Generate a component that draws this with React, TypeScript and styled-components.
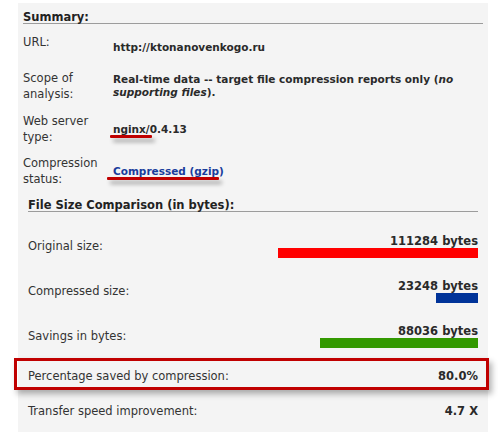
import React from "react";
import styled, { createGlobalStyle } from "styled-components";

const GlobalStyle = createGlobalStyle`
  html, body {
    margin: 0;
    padding: 0;
    background: #ffffff;
  }
  body {
    font-family: "DejaVu Sans", Verdana, sans-serif;
    font-size: 11.5px;
    color: #333333;
  }
`;

const Panel = styled.div`
  margin: 3px 0 0 18px;
  width: 470px;
  min-height: 429px;
  background: #f4f4f4;
`;

const Summary = styled.section`
  padding: 0 5px;
`;

const Heading = styled.h3`
  margin: 0;
  padding-top: 8px;
  font-size: 11.5px;
  line-height: 12px;
  font-weight: bold;
  color: #222222;
  border-bottom: 1px solid #9c9c9c;
`;

const InfoRow = styled.div<{ $space: number }>`
  display: grid;
  grid-template-columns: 84px 1fr;
  column-gap: 6px;
  align-items: center;
  margin-top: ${({ $space }) => $space}px;
`;

const InfoLabel = styled.div`
  line-height: 16px;
  color: #333333;
`;

const InfoValue = styled.div<{ $drop?: number }>`
  font-size: 10.5px;
  line-height: 13px;
  font-weight: bold;
  color: #2a2a2a;
  margin-top: ${({ $drop }) => $drop ?? 0}px;
`;

const Marked = styled.span`
  position: relative;
  display: inline-block;
`;

const Scribble = styled.span<{ $left: number; $width: number; $top: number }>`
  position: absolute;
  left: ${({ $left }) => $left}px;
  top: ${({ $top }) => $top}px;
  width: ${({ $width }) => $width}px;
  height: 3px;
  background: #c00000;
  border-radius: 1px;
  box-shadow: 3px 4px 4px rgba(0, 0, 0, 0.35);
`;

const Status = styled.span`
  color: #183c9c;
`;

const Comparison = styled.section`
  margin-top: 4px;
  padding: 0 10px;
`;

const SizeList = styled.div`
  margin-top: 12px;
`;

const SizeRow = styled.div`
  position: relative;
  display: flex;
  justify-content: space-between;
  align-items: center;
  padding: 11px 0;
`;

const SizeLabel = styled.div`
  line-height: 13px;
  color: #333333;
`;

const SizeValue = styled.div`
  display: flex;
  flex-direction: column;
  align-items: flex-end;
  line-height: 13px;
  font-weight: bold;
  color: #2a2a2a;
`;

const Bar = styled.div<{ $color: string }>`
  height: 10px;
  background: ${({ $color }) => $color};
`;

const HighlightBox = styled.div`
  position: absolute;
  left: -14px;
  right: -11px;
  top: -1px;
  bottom: 4px;
  border: 3px solid #c00000;
  box-shadow: 3px 4px 6px rgba(0, 0, 0, 0.3);
  pointer-events: none;
`;

const sizes = [
  { label: "Original size:", bytes: 111284, color: "#ff0000" },
  { label: "Compressed size:", bytes: 23248, color: "#003399" },
  { label: "Savings in bytes:", bytes: 88036, color: "#339900" },
];

const maxBar = 200;

const App: React.FC = () => {
  const max = Math.max(...sizes.map((s) => s.bytes));

  return (
    <>
      <GlobalStyle />
      <Panel>
        <Summary>
          <Heading>Summary:</Heading>
          <InfoRow $space={5}>
            <InfoLabel>URL:</InfoLabel>
            <InfoValue $drop={12}>http://ktonanovenkogo.ru</InfoValue>
          </InfoRow>
          <InfoRow $space={16}>
            <InfoLabel>Scope of analysis:</InfoLabel>
            <InfoValue>
              Real-time data -- target file compression reports only (<i>no</i>{" "}
              <i>supporting files</i>).
            </InfoValue>
          </InfoRow>
          <InfoRow $space={11}>
            <InfoLabel>Web server type:</InfoLabel>
            <InfoValue>
              <Marked>
                nginx
                <Scribble $left={-3} $width={42} $top={12} />
              </Marked>
              /0.4.13
            </InfoValue>
          </InfoRow>
          <InfoRow $space={10}>
            <InfoLabel>Compression status:</InfoLabel>
            <InfoValue>
              <Marked>
                <Status>Compressed (gzip)</Status>
                <Scribble $left={-6} $width={112} $top={12} />
              </Marked>
            </InfoValue>
          </InfoRow>
        </Summary>

        <Comparison>
          <Heading>File Size Comparison (in bytes):</Heading>
          <SizeList>
            {sizes.map((s) => (
              <SizeRow key={s.label}>
                <SizeLabel>{s.label}</SizeLabel>
                <SizeValue>
                  <span>{s.bytes} bytes</span>
                  <Bar
                    $color={s.color}
                    style={{ width: Math.round((s.bytes / max) * maxBar) }}
                  />
                </SizeValue>
              </SizeRow>
            ))}
            <SizeRow>
              <SizeLabel>Percentage saved by compression:</SizeLabel>
              <SizeValue>80.0%</SizeValue>
              <HighlightBox />
            </SizeRow>
            <SizeRow>
              <SizeLabel>Transfer speed improvement:</SizeLabel>
              <SizeValue>4.7 X</SizeValue>
            </SizeRow>
          </SizeList>
        </Comparison>
      </Panel>
    </>
  );
};

export default App;
